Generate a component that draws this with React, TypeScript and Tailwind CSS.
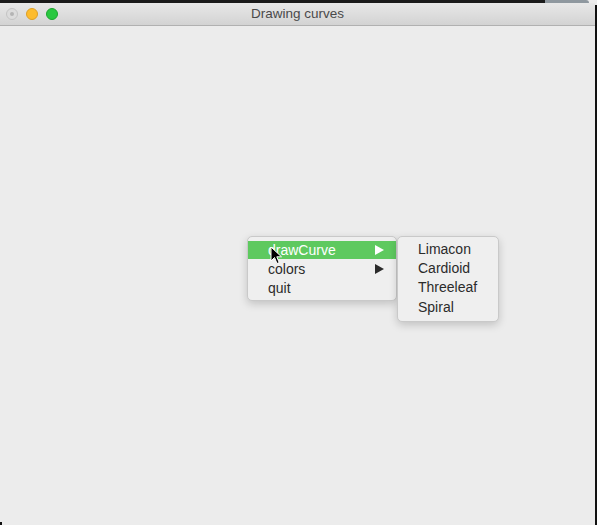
import React from "react";

function Arrow({ color }: { color: string }) {
  return (
    <svg width="9" height="10" viewBox="0 0 9 10" className="block">
      <path d="M0 0 L9 5 L0 10 Z" fill={color} />
    </svg>
  );
}

function Cursor() {
  return (
    <svg width="13" height="19" viewBox="0 0 13 19" className="absolute left-[270px] top-[246px]">
      <path
        d="M1 1 L1 15 L4.5 11.5 L7 17.5 L9.2 16.6 L6.8 10.8 L11.5 10.8 Z"
        fill="#000"
        stroke="#fff"
        strokeWidth="1"
        strokeLinejoin="round"
      />
    </svg>
  );
}

export default function App() {
  return (
    <div
      className="relative w-[597px] h-[525px] flex flex-col bg-[#ececec] overflow-hidden"
      style={{ fontFamily: '"Liberation Sans", Arial, sans-serif' }}
    >
      <div className="flex h-[3px] shrink-0">
        <div className="w-[545px] bg-[#1b1b1b]" />
        <div className="w-[44px] bg-[#8f989f] rounded-tr-[4px]" />
        <div className="flex-1 bg-[#ececec]" />
      </div>
      <div className="flex flex-1">
        <div className="flex flex-col flex-1">
          <div className="h-[23px] shrink-0 flex items-center relative bg-gradient-to-b from-[#e8e8e8] to-[#d3d3d3] border-b border-[#b1b1b1]">
            <div className="flex items-center gap-[8px] pl-[6px]">
              <div className="w-[12px] h-[12px] rounded-full border border-[#c4c4c4] bg-[#dcdcdc] flex items-center justify-center">
                <div className="w-[4px] h-[4px] rounded-full bg-[#b4b4b4]" />
              </div>
              <div className="w-[12px] h-[12px] rounded-full bg-[#fdbc2e] border border-[#de9f24]" />
              <div className="w-[12px] h-[12px] rounded-full bg-[#29c840] border border-[#1ba52e]" />
            </div>
            <div className="absolute inset-0 pt-[1px] flex items-center justify-center text-[13.5px] text-[#4a4a4a]">
              Drawing curves
            </div>
          </div>
          <div className="flex-1 bg-[#ececec]" />
        </div>
        <div className="w-[2px] bg-[#111] mt-[2px]" />
      </div>

      {/* Main context menu */}
      <div className="absolute left-[247px] top-[236px] w-[150px] h-[65px] rounded-[5px] bg-[#efefef] border border-[#c9c9c9] shadow-[0_3px_8px_rgba(0,0,0,0.18)] pt-[4px] text-[14px] text-[#2b2b2b]">
        <div className="h-[18px] bg-[#5ec95f] flex items-center justify-between pl-[20px] pr-[12px] text-white">
          <span className="leading-none -mt-[1px]">drawCurve</span>
          <Arrow color="#ffffff" />
        </div>
        <div className="h-[20px] flex items-center justify-between pl-[20px] pr-[12px]">
          <span className="leading-none">colors</span>
          <Arrow color="#2b2b2b" />
        </div>
        <div className="h-[19px] flex items-center pl-[20px] pr-[12px]">
          <span className="leading-none -mt-[1px]">quit</span>
        </div>
      </div>

      {/* Submenu */}
      <div className="absolute left-[397px] top-[236px] w-[102px] h-[86px] rounded-[5px] bg-[#efefef] border border-[#c9c9c9] shadow-[0_3px_8px_rgba(0,0,0,0.18)] pt-[2px] text-[14px] text-[#2b2b2b]">
        {["Limacon", "Cardioid", "Threeleaf", "Spiral"].map((t) => (
          <div key={t} className="h-[19.3px] flex items-center pl-[20px]">
            <span className="leading-none">{t}</span>
          </div>
        ))}
      </div>

      <Cursor />
      <div className="absolute left-0 bottom-0 w-[2px] h-[3px] bg-[#111]" />
    </div>
  );
}
